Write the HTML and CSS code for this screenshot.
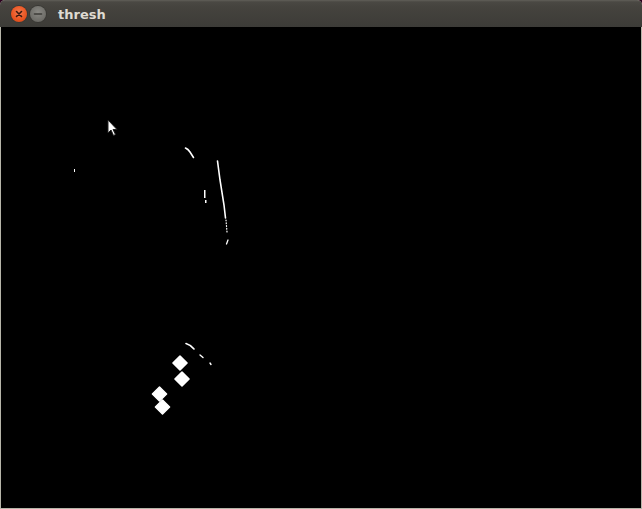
FILE: index.html
```html
<!DOCTYPE html>
<html>
<head>
<meta charset="utf-8">
<link rel="stylesheet" href="styles.css">
<title>thresh</title>
</head>
<body>
<div class="window">
  <div class="titlebar">
    <div class="controls">
      <span class="btn close">
        <svg width="16" height="16" viewBox="0 0 16 16"><path d="M5.5 5.5 L10.5 10.5 M10.5 5.5 L5.5 10.5" stroke="#3a1a10" stroke-width="1.6" stroke-linecap="round"/></svg>
      </span>
      <span class="btn minimize">
        <svg width="16" height="16" viewBox="0 0 16 16"><path d="M4.5 8 H11.5" stroke="#3c3b37" stroke-width="1.6" stroke-linecap="round"/></svg>
      </span>
    </div>
    <span class="title">thresh</span>
  </div>
  <div class="content">
    <svg class="canvas" width="640" height="481" viewBox="1 27 640 481">
      <g fill="#fff" stroke="none">
        <rect x="74" y="169" width="1" height="3"/>
        <rect x="204" y="190" width="1.5" height="8"/>
        <rect x="205" y="200" width="1.5" height="3"/>
      </g>
      <g fill="none" stroke="#fff" stroke-linecap="round">
        <path d="M185.5 148 Q188 149 190 152 L193.5 157.5" stroke-width="1.6"/>
        <path d="M217.5 161 L220 180 L224 205 L225.5 218" stroke-width="1.6"/>
        <path d="M226 220 L227 232" stroke-width="1.2" stroke-dasharray="0.8 2"/>
        <path d="M228 240 L226.5 244" stroke-width="1.3"/>
        <path d="M186 343.5 Q191 345 194 349" stroke-width="1.6"/>
        <path d="M200 355 L203 357.5" stroke-width="1.4"/>
        <path d="M210 363 L211 364.5" stroke-width="1.4"/>
      </g>
      <g fill="#fff" stroke="#fff" stroke-width="1.5" stroke-linejoin="round">
        <rect x="175" y="358" width="10" height="10" transform="rotate(45 180 363)"/>
        <rect x="177" y="374" width="10" height="10" transform="rotate(45 182 379)"/>
        <rect x="154.5" y="389" width="10" height="10" transform="rotate(45 159.5 394)"/>
        <rect x="157.5" y="402" width="10" height="10" transform="rotate(45 162.5 407)"/>
      </g>
    </svg>
    <svg class="cursor" width="12" height="18" viewBox="0 0 12 18">
      <path d="M1 1 L1 14 L4 11 L6.5 16.5 L8.5 15.5 L6 10.5 L10 10.5 Z" fill="#fff" stroke="#222" stroke-width="1" stroke-linejoin="round"/>
    </svg>
  </div>
</div>
</body>
</html>
```

FILE: styles.css
```css
html, body {
  margin: 0;
  padding: 0;
  background: #2c001e;
}
.window {
  width: 642px;
  height: 509px;
  display: flex;
  flex-direction: column;
  border-radius: 5px 5px 0 0;
  overflow: hidden;
  background: #b6b5a9;
}
.titlebar {
  height: 27px;
  flex: 0 0 27px;
  box-sizing: border-box;
  display: flex;
  align-items: center;
  background: linear-gradient(#55534d 0px, #4a4843 1px, #45433e 6px, #3c3b37 27px);
  border-top: 1px solid #5b5953;
}
.controls {
  display: flex;
  gap: 3px;
  padding-left: 11px;
  margin-top: -1px;
}
.btn {
  width: 16px;
  height: 16px;
  border-radius: 50%;
  display: block;
}
.btn svg {
  display: block;
}
.close {
  background: radial-gradient(circle at 50% 40%, #f47a4f 0%, #e95420 60%, #c8441a 100%);
  box-shadow: 0 0 0 1px #3a3935;
}
.minimize {
  background: radial-gradient(circle at 50% 40%, #8a8984 0%, #6f6e69 65%, #5c5b56 100%);
  box-shadow: 0 0 0 1px #3a3935;
}
.title {
  margin-left: 12px;
  font-family: "DejaVu Sans", sans-serif;
  font-weight: bold;
  font-size: 13px;
  color: #dfdbd2;
  letter-spacing: 0;
}
.content {
  flex: 1;
  margin: 0 1px 1px 1px;
  background: #000;
  position: relative;
}
.canvas {
  display: block;
}
.cursor {
  position: absolute;
  left: 106px;
  top: 92px;
}
```
